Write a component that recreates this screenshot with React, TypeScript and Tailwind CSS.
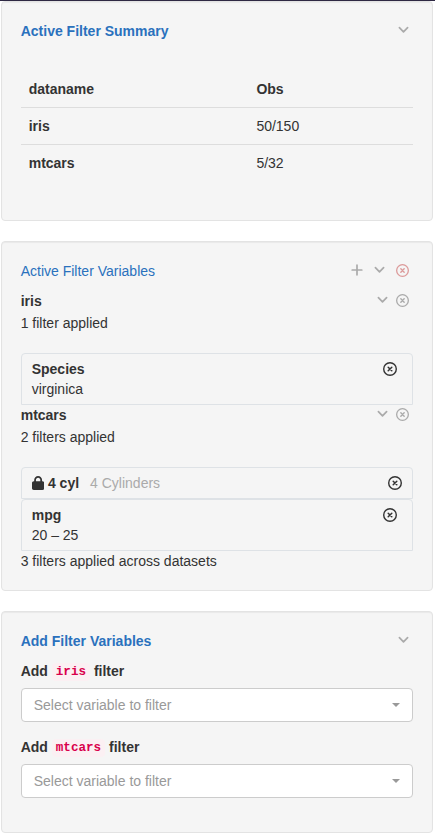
import type { ReactNode } from "react";
import { FaLock } from "react-icons/fa6";

function Panel({ className, children }: { className: string; children: ReactNode }) {
  return (
    <section
      className={`flex w-[432px] flex-col rounded border border-[#e3e3e3] bg-[#f5f5f5] p-[19px] shadow-[inset_0_1px_1px_rgba(0,0,0,0.05)] ${className}`}
    >
      {children}
    </section>
  );
}

function Chevron() {
  return (
    <svg
      viewBox="0 0 11 12"
      className="h-[12px] w-[11px] text-[#aaaaaa]"
      fill="none"
      stroke="currentColor"
      strokeWidth="1.7"
      strokeLinecap="round"
      strokeLinejoin="round"
    >
      <path d="M1.4 3.6 5.5 7.8 9.6 3.6" />
    </svg>
  );
}

function Plus() {
  return (
    <svg
      viewBox="0 0 12 12"
      className="mr-[11px] h-[12px] w-[12px]"
      fill="none"
      stroke="currentColor"
      strokeWidth="1.7"
      strokeLinecap="round"
    >
      <path d="M6 1.2v9.6M1.2 6h9.6" />
    </svg>
  );
}

function CircleX({ className }: { className: string }) {
  return (
    <svg viewBox="0 0 14 14" className={className} fill="none" stroke="currentColor" strokeLinecap="round">
      <circle cx="7" cy="7" r="6.3" strokeWidth="1.4" />
      <path d="m5.2 5.2 3.6 3.6M8.8 5.2 5.2 8.8" strokeWidth="1.5" />
    </svg>
  );
}

function Select() {
  return (
    <div className="flex h-[34px] items-center justify-between rounded border border-[#cccccc] bg-white pl-3 pr-3">
      <span className="leading-5 text-[#999999]">Select variable to filter</span>
      <span className="h-0 w-0 border-x-4 border-t-4 border-x-transparent border-t-[#999999]" />
    </div>
  );
}

function AddLabel({ name }: { name: string }) {
  return (
    <div className="mb-[7px] flex h-5 items-center whitespace-pre font-bold">
      <span>Add </span>
      <code className="mt-[2px] rounded bg-[#fbf0f3] px-1 py-0.5 font-['Liberation_Mono',monospace] text-[12.6px] leading-[14px] text-[#d9004c]">
        {name}
      </code>
      <span> filter</span>
    </div>
  );
}

function Dataset({ name, count }: { name: string; count: string }) {
  return (
    <div className="mb-5">
      <div className="mb-0.5 flex h-5 items-center justify-between">
        <b>{name}</b>
        <div className="mr-[4px] flex items-center gap-[8px] pb-0.5 text-[#aaaaaa]">
          <Chevron />
          <CircleX className="h-[13px] w-[13px]" />
        </div>
      </div>
      <div className="h-5">{count}</div>
    </div>
  );
}

function FilterCard({ name, value }: { name: string; value: string }) {
  return (
    <div className="flex h-[52px] justify-between rounded-t border border-[#dee2e6] py-[5px] pl-[10px] pr-[14.5px]">
      <div>
        <div className="font-bold">{name}</div>
        <div>{value}</div>
      </div>
      <CircleX className="mt-[3px] h-[14px] w-[14px]" />
    </div>
  );
}

export default function App() {
  return (
    <main className="h-[834px] w-[435px] overflow-hidden border-t border-[#2e2843] bg-white pl-[0.7px] font-['Liberation_Sans',Arial,sans-serif] text-[14px] leading-5 text-[#333333]">
      <div className="flex flex-col gap-5">
        <Panel className="h-[220px]">
          <div className="flex h-5 items-center justify-between pr-[3.7px]">
            <h2 className="font-bold text-[#2a71bd]">Active Filter Summary</h2>
            <div className="pb-0.5">
              <Chevron />
            </div>
          </div>
          <table className="mt-[30px] w-full table-fixed border-separate border-spacing-0 text-left">
            <thead>
              <tr>
                <th className="h-[37px] w-[227.7px] border-b border-[#dddddd] p-0 pl-2">dataname</th>
                <th className="h-[37px] border-b border-[#dddddd] p-0 pl-2">Obs</th>
              </tr>
            </thead>
            <tbody>
              <tr>
                <th className="h-[37px] border-b border-[#dddddd] p-0 pl-2">iris</th>
                <td className="h-[37px] border-b border-[#dddddd] p-0 pl-2">50/150</td>
              </tr>
              <tr>
                <th className="h-[36px] p-0 pl-2">mtcars</th>
                <td className="h-[36px] p-0 pl-2">5/32</td>
              </tr>
            </tbody>
          </table>
        </Panel>

        <Panel className="h-[350px]">
          <div className="mb-[10px] flex h-5 items-center justify-between">
            <h2 className="text-[#2a71bd]">Active Filter Variables</h2>
            <div className="mr-[4px] flex items-center pb-0.5 text-[#aaaaaa]">
              <Plus />
              <Chevron />
              <CircleX className="ml-[11px] h-[13px] w-[13px] text-[#dc9a9a]" />
            </div>
          </div>
          <Dataset name="iris" count="1 filter applied" />
          <FilterCard name="Species" value="virginica" />
          <Dataset name="mtcars" count="2 filters applied" />
          <div className="flex h-8 items-center justify-between rounded-t border border-[#dee2e6] pl-[10px] pr-[10px]">
            <div className="flex items-center">
              <FaLock className="h-[14px] w-[12.25px]" />
              <b className="ml-[4px]">4 cyl</b>
              <span className="ml-[11px] text-[#aaaaaa]">4 Cylinders</span>
            </div>
            <CircleX className="h-[14px] w-[14px]" />
          </div>
          <FilterCard name="mpg" value="20 – 25" />
          <div>3 filters applied across datasets</div>
        </Panel>

        <Panel className="h-[222px]">
          <div className="mb-[10px] flex h-5 items-center justify-between pr-[3.7px]">
            <h2 className="font-bold text-[#2a71bd]">Add Filter Variables</h2>
            <div className="pb-0.5">
              <Chevron />
            </div>
          </div>
          <AddLabel name="iris" />
          <Select />
          <div className="h-[15px]" />
          <AddLabel name="mtcars" />
          <Select />
        </Panel>
      </div>
    </main>
  );
}
